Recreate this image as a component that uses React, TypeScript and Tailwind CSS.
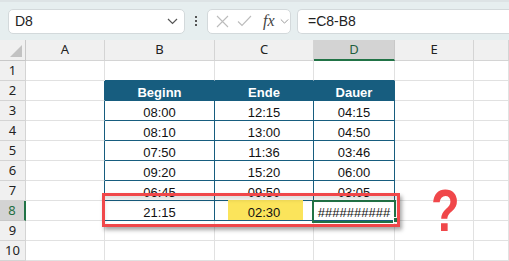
import React from 'react';

const COLS = ['A', 'B', 'C', 'D', 'E', ''];

// table data, rows 3..8 -> [Beginn, Ende, Dauer]
const DATA: string[][] = [
    ['08:00', '12:15', '04:15'],
    ['08:10', '13:00', '04:50'],
    ['07:50', '11:36', '03:46'],
    ['09:20', '15:20', '06:00'],
    ['06:45', '09:50', '03:05'],
    ['21:15', '02:30', '##########'],
];

const Chevron: React.FC<{ className?: string }> = ({ className }) => (
    <svg className={className} width="11" height="7" viewBox="0 0 11 7" fill="none">
        <path d="M1 1 L5.5 5.5 L10 1" stroke="currentColor" strokeWidth="1.2" />
    </svg>
);

const FormulaBar = () => (
    <div className="h-[40px] bg-[#e6eeef] border-t-2 border-[#dde3e5] flex items-center pl-[8px] gap-[6px]">
        <div className="w-[177px] h-[25px] bg-white rounded-[5px] border border-[#d3d9db] flex items-center justify-between pl-[6px] pr-[6px]">
            <span className="text-[14px] text-[#222]">D8</span>
            <Chevron className="text-[#555]" />
        </div>
        <div className="w-[10px] flex flex-col items-center gap-[2px]">
            <span className="w-[2px] h-[2px] bg-[#555]" />
            <span className="w-[2px] h-[2px] bg-[#555]" />
            <span className="w-[2px] h-[2px] bg-[#555]" />
        </div>
        <div className="w-[84px] h-[25px] bg-white rounded-[5px] border border-[#d3d9db] flex items-center pl-[8px] gap-[5px]">
            <svg width="13" height="13" viewBox="0 0 13 13" fill="none">
                <path d="M1 1 L12 12 M12 1 L1 12" stroke="#bcbcbc" strokeWidth="1.1" />
            </svg>
            <svg width="15" height="12" viewBox="0 0 15 12" fill="none" className="ml-[3px]">
                <path d="M1 6.5 L5 10.5 L14 1" stroke="#bcbcbc" strokeWidth="1.1" />
            </svg>
            <span className="ml-[6px] text-[16px] italic text-[#444] leading-none" style={{ fontFamily: '"Liberation Serif", serif' }}>fx</span>
            <Chevron className="text-[#999] w-[9px]" />
        </div>
        <div className="flex-1 h-[25px] bg-white rounded-l-[5px] border border-r-0 border-[#d3d9db] flex items-center pl-[10px]">
            <span className="text-[14px] text-[#222]">=C8-B8</span>
        </div>
    </div>
);

export default function App() {
    const rows = Array.from({ length: 10 }, (_, i) => i + 1);

    const cellContent = (r: number, c: number) => {
        // c: 0=A .. 5=F
        const inTable = c >= 1 && c <= 3 && r >= 2 && r <= 8;
        const base = 'h-[20px] border-r border-b flex items-end justify-center text-[13px] leading-[15px]';
        if (!inTable) {
            let cls = 'border-[#e1e1e1]';
            // A column next to the table gets the teal edge
            if (c === 0 && r >= 2 && r <= 8) cls = 'border-b-[#e1e1e1] border-r-[#175d7f]';
            if (r === 1 && c >= 1 && c <= 3) cls = 'border-r-[#e1e1e1] border-b-[#175d7f]';
            return <div key={`${r}-${c}`} className={`${base} ${cls}`} />;
        }
        if (r === 2) {
            const t = ['Beginn', 'Ende', 'Dauer'][c - 1];
            return (
                <div key={`${r}-${c}`} className={`${base} bg-[#175d7f] border-[#175d7f] text-white font-bold`}>
                    {t}
                </div>
            );
        }
        const v = DATA[r - 3][c - 1];
        if (r === 8 && c === 2) {
            return (
                <div key={`${r}-${c}`} className={`${base} border-[#175d7f] relative text-[#111]`}>
                    <span className="absolute left-[13px] top-[-1px] w-[75px] h-[20px] bg-[#fbe45b]" />
                    <span className="relative">{v}</span>
                </div>
            );
        }
        if (r === 8 && c === 3) {
            return (
                <div key={`${r}-${c}`} className={`${base} border-[#175d7f] relative text-[#111]`}>
                    <span className="absolute left-[-2px] top-[-1px] w-[84px] h-[23px] border-2 border-[#217346]" />
                    <span className="absolute left-[79px] top-[16px] w-[6px] h-[6px] bg-[#217346] border border-white" />
                    <span className="relative">{v}</span>
                </div>
            );
        }
        return (
            <div key={`${r}-${c}`} className={`${base} border-[#175d7f] text-[#111]`}>
                {v}
            </div>
        );
    };

    return (
        <div className="w-[509px] h-[261px] overflow-hidden bg-white" style={{ fontFamily: '"Liberation Sans", Arial, sans-serif' }}>
            <FormulaBar />
            <div className="relative">
                <div className="grid grid-cols-[26px_79px_110px_99px_81px_79px_1fr]">
                    {/* column headers */}
                    <div className="h-[21px] bg-[#f0f0f0] border-r border-b border-[#c8c8c8] relative">
                        <svg className="absolute right-[3px] bottom-[3px]" width="12" height="12" viewBox="0 0 12 12">
                            <path d="M12 0 L12 12 L0 12 Z" fill="#c2c2c2" />
                        </svg>
                    </div>
                    {COLS.map((c) =>
                        c === 'D' ? (
                            <div key={c} className="h-[21px] bg-[#d3d3d3] border-r border-[#c8c8c8] border-b-2 border-b-[#217346] flex items-center justify-center text-[13px] text-[#1f5f3d]" style={{ fontFamily: '"Noto Sans", sans-serif' }}>
                                {c}
                            </div>
                        ) : (
                            <div key={c || 'f'} className="h-[21px] bg-[#f0f0f0] border-r border-b border-[#d4d4d4] flex items-center justify-center text-[13px] text-[#222]" style={{ fontFamily: '"Noto Sans", sans-serif' }}>
                                {c}
                            </div>
                        )
                    )}
                    {rows.map((r) => (
                        <React.Fragment key={r}>
                            {r === 8 ? (
                                <div className="h-[20px] bg-[#d3d3d3] border-b border-[#c8c8c8] border-r-2 border-r-[#217346] flex items-center justify-center text-[13px] text-[#1f6e42]" style={{ fontFamily: '"Noto Sans", sans-serif' }}>
                                    {r}
                                </div>
                            ) : (
                                <div className="h-[20px] bg-[#f0f0f0] border-r border-b border-[#d4d4d4] flex items-center justify-center text-[13px] text-[#222]" style={{ fontFamily: '"Noto Sans", sans-serif' }}>
                                    {r}
                                </div>
                            )}
                            {[0, 1, 2, 3, 4, 5].map((c) => cellContent(r, c))}
                        </React.Fragment>
                    ))}
                </div>

                {/* red highlight frame */}
                <div className="absolute left-[102px] top-[153px] w-[298px] h-[34px] border-[3px] border-[#f0474a] shadow-[2px_3px_4px_rgba(0,0,0,0.35),inset_0_4px_4px_rgba(0,0,0,0.12)] pointer-events-none" />
                {/* question mark */}
                <div className="absolute left-[427px] top-[141px] text-[60px] font-bold text-[#f0474a] leading-none scale-x-[0.78]">?</div>
            </div>
        </div>
    );
}
